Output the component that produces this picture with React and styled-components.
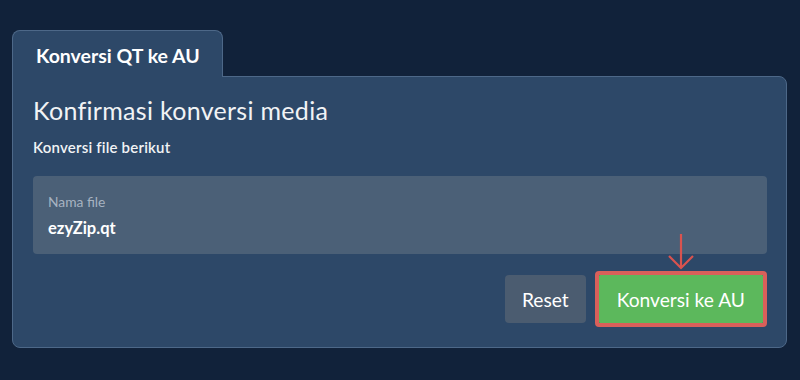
import React from "react";
import styled, { createGlobalStyle } from "styled-components";

const GlobalStyle = createGlobalStyle`
  html, body {
    margin: 0;
    padding: 0;
    background: #11223a;
    font-family: Lato, "Noto Sans", sans-serif;
    color: #f1f3f5;
  }
`;

const App = () => {
  return (
    <>
      <GlobalStyle />
      <Page>
        <Tab>Konversi QT ke AU</Tab>
        <Panel>
          <Title>Konfirmasi konversi media</Title>
          <Subtitle>Konversi file berikut</Subtitle>
          <FileBox>
            <FileLabel>Nama file</FileLabel>
            <FileName>ezyZip.qt</FileName>
          </FileBox>
          <Actions>
            <Button $variant="muted">Reset</Button>
            <Highlight>
              <Arrow width="28" height="38" viewBox="0 0 28 38">
                <path
                  d="M14 1 V35 M2 23 L14 35 L26 23"
                  fill="none"
                  stroke="#d9534f"
                  strokeWidth="2.2"
                />
              </Arrow>
              <Button $variant="success">Konversi ke AU</Button>
            </Highlight>
          </Actions>
        </Panel>
      </Page>
    </>
  );
};

const Page = styled.div`
  padding: 30px 13px 0 12px;
  display: flex;
  flex-direction: column;
  align-items: flex-start;
`;

const Tab = styled.div`
  position: relative;
  z-index: 1;
  margin-bottom: -1px;
  height: 47px;
  box-sizing: border-box;
  padding: 2px 22px 0 23px;
  display: flex;
  align-items: center;
  background: #2d4868;
  border: 1px solid #4d6888;
  border-bottom: none;
  border-radius: 8px 8px 0 0;
  font-size: 19.5px;
  font-weight: 700;
  color: #ffffff;
`;

const Panel = styled.div`
  align-self: stretch;
  box-sizing: border-box;
  background: #2d4868;
  border: 1px solid #4d6888;
  border-radius: 0 8px 8px 8px;
  padding: 18px 19px 20px 20px;
`;

const Title = styled.h2`
  margin: 0;
  font-size: 25px;
  letter-spacing: 0.3px;
  font-weight: 400;
  line-height: 31px;
  color: #f1f3f5;
`;

const Subtitle = styled.p`
  margin: 11px 0 0;
  font-size: 15px;
  letter-spacing: 0.2px;
  font-weight: 600;
  line-height: 20px;
`;

const FileBox = styled.div`
  margin-top: 19px;
  height: 78px;
  box-sizing: border-box;
  background: #4b6077;
  border-radius: 4px;
  padding: 17px 15px 0;
`;

const FileLabel = styled.div`
  font-size: 13.8px;
  line-height: 18px;
  color: #a7b3c1;
`;

const FileName = styled.div`
  margin-top: 6px;
  font-size: 16.5px;
  font-weight: 700;
  line-height: 22px;
  color: #ffffff;
`;

const Actions = styled.div`
  margin-top: 17px;
  display: flex;
  justify-content: flex-end;
  align-items: center;
  gap: 9px;
`;

const Highlight = styled.div`
  position: relative;
  border: 4px solid #d9605a;
  border-radius: 4px;
  display: flex;
`;

const Arrow = styled.svg`
  position: absolute;
  left: 50%;
  top: -42px;
  transform: translateX(-50%);
`;

const Button = styled.button`
  height: 48px;
  border: none;
  border-radius: ${(p) => (p.$variant === "success" ? "1px" : "4px")};
  padding: 0 ${(p) => (p.$variant === "success" ? "18px" : "17px")};
  font-family: inherit;
  font-size: 19.2px;
  font-weight: 400;
  color: #ffffff;
  background: ${(p) => (p.$variant === "success" ? "#5cb85c" : "#4b5c70")};
  cursor: pointer;
`;

export default App;
